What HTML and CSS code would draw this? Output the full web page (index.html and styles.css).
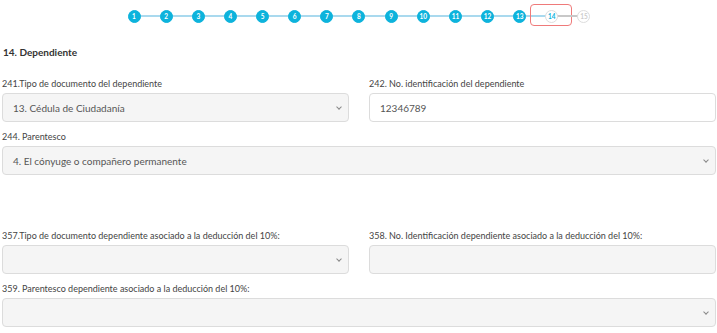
FILE: index.html
```html
<!DOCTYPE html>
<html lang="es">
<head>
  <meta charset="UTF-8" />
  <meta name="viewport" content="width=device-width, initial-scale=1.0"/>
  <title>Dependiente</title>
  <link rel="stylesheet" href="styles.css">
</head>
<body>
  <ol class="stepper">
    <li class="step done"><span>1</span></li>
    <li class="step done"><span>2</span></li>
    <li class="step done"><span>3</span></li>
    <li class="step done"><span>4</span></li>
    <li class="step done"><span>5</span></li>
    <li class="step done"><span>6</span></li>
    <li class="step done"><span>7</span></li>
    <li class="step done"><span>8</span></li>
    <li class="step done"><span>9</span></li>
    <li class="step done"><span>10</span></li>
    <li class="step done"><span>11</span></li>
    <li class="step done"><span>12</span></li>
    <li class="step done"><span>13</span></li>
    <li class="step current"><span>14</span></li>
    <li class="step"><span>15</span></li>
  </ol>

  <h4 class="section-title">14. Dependiente</h4>

  <form class="form">
    <div class="row">
      <div class="field">
        <label>241.Tipo de documento del dependiente</label>
        <div class="select">13. Cédula de Ciudadanía</div>
      </div>
      <div class="field">
        <label>242. No. identificación del dependiente</label>
        <div class="input">12346789</div>
      </div>
    </div>
    <div class="row">
      <div class="field wide">
        <label>244. Parentesco</label>
        <div class="select">4. El cónyuge o compañero permanente</div>
      </div>
    </div>

    <div class="spacer"></div>

    <div class="row">
      <div class="field">
        <label>357.Tipo de documento dependiente asociado a la deducción del 10%:</label>
        <div class="select"></div>
      </div>
      <div class="field">
        <label>358. No. Identificación dependiente asociado a la deducción del 10%:</label>
        <div class="input disabled"></div>
      </div>
    </div>
    <div class="row">
      <div class="field wide">
        <label>359. Parentesco dependiente asociado a la deducción del 10%:</label>
        <div class="select"></div>
      </div>
    </div>
  </form>
</body>
</html>
```

FILE: styles.css
```css
body {
  font-family: Lato, "Open Sans", sans-serif;
  background: #fff;
  color: #444;
  margin: 0;
  padding: 0 1px 0 2px;
}
.stepper {
  list-style: none;
  margin: 0;
  padding: 0;
  height: 32px;
  display: flex;
  justify-content: center;
  align-items: center;
}
.step {
  position: relative;
  width: 32.15px;
  height: 14px;
  display: flex;
  justify-content: center;
  align-items: center;
}
.step::after {
  content: "";
  position: absolute;
  left: 50%;
  width: 100%;
  top: 6px;
  height: 2px;
  background: #a9d9ee;
}
.step:last-child::after {
  display: none;
}
.step.current::after {
  background: #c8c8c8;
}
.step span {
  position: relative;
  z-index: 1;
  width: 11px;
  height: 11px;
  border-radius: 50%;
  border: 1px solid #ddd;
  background: #fff;
  color: #ccc;
  font-size: 6.5px;
  font-weight: bold;
  display: flex;
  justify-content: center;
  align-items: center;
}
.step.done span {
  background: #0db3dc;
  border-color: #0db3dc;
  color: #fff;
}
.step.current span {
  color: #0db3dc;
}
.step.current::before {
  content: "";
  position: absolute;
  left: -6px;
  right: -4px;
  top: -5px;
  bottom: -3px;
  border: 1px solid #ef7a7a;
  border-radius: 4px;
}
.section-title {
  font-size: 10px;
  font-weight: bold;
  color: #333;
  margin: 14px 0 20px 1px;
}
.row {
  display: grid;
  grid-template-columns: 1fr 1fr;
  column-gap: 20px;
}
.field {
  margin-bottom: 9px;
}
.field.wide {
  grid-column: 1 / 3;
}
.field label {
  display: block;
  font-size: 9px;
  line-height: 12px;
  color: #444;
  margin-bottom: 3px;
}
.select,
.input {
  box-sizing: border-box;
  height: 29px;
  border: 1px solid #dcdcdc;
  border-radius: 4px;
  background: #f5f5f5;
  padding: 0 10px;
  font-size: 10px;
  color: #555;
  display: flex;
  align-items: center;
}
.input {
  background: #fff;
}
.input.disabled {
  background: #f5f5f5;
}
.select {
  justify-content: space-between;
}
.select::after {
  content: "";
  width: 3px;
  height: 3px;
  border-right: 1px solid #888;
  border-bottom: 1px solid #888;
  transform: rotate(45deg);
  margin: -2px -3px 0 0;
}
.select:empty::after {
  margin-left: auto;
}
.spacer {
  height: 46px;
}
```
